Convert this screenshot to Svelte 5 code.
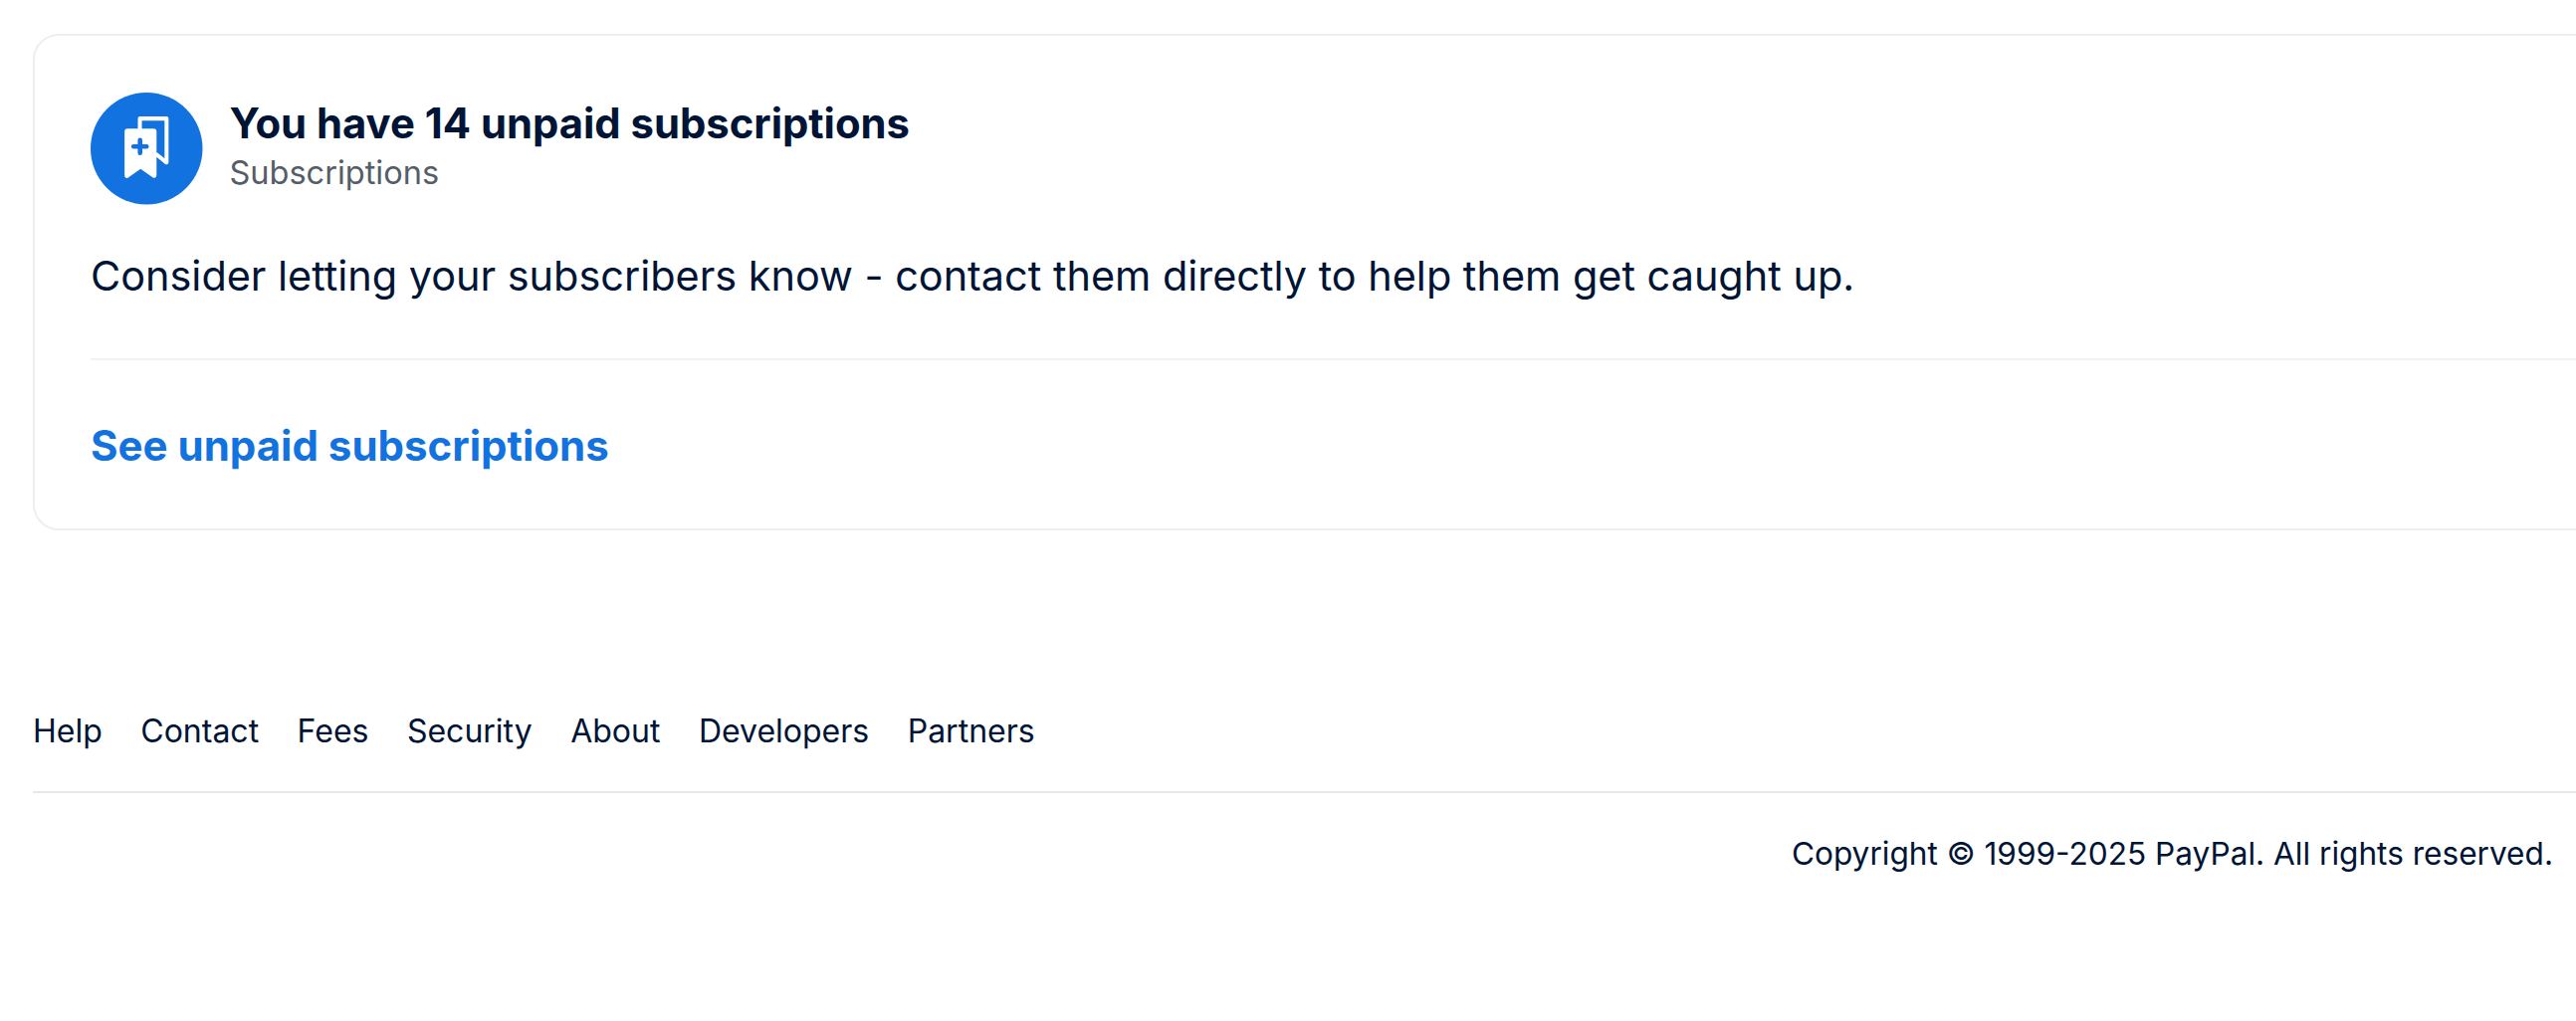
<!-- Unpaid subscriptions notice with page footer -->
<script>
  const footerLinks = ['Help', 'Contact', 'Fees', 'Security', 'About', 'Developers', 'Partners'];
</script>

<main class="page">
  <section class="card">
    <header class="card-head">
      <div class="badge">
        <svg viewBox="0 0 112 112" width="112.500" height="112.500" aria-hidden="true">
          <circle cx="56" cy="56" r="56" fill="#1272e0" />
          <path d="M49.3 36V26H76V70L66 62" fill="none" stroke="#fff" stroke-width="4" stroke-linejoin="round" stroke-linecap="round" />
          <path d="M37 36H63a3 3 0 0 1 3 3V83a2.4 2.4 0 0 1-3.9 1.9L50 76.500 38 84.900A2.400 2.400 0 0 1 34 83V39a3 3 0 0 1 3-3Z" fill="#fff" />
          <path d="M43 54H56M49.500 47.500V60.500" fill="none" stroke="#1272e0" stroke-width="4.600" stroke-linecap="round" />
        </svg>
      </div>
      <div class="titles">
        <h2>You have 14 unpaid subscriptions</h2>
        <p class="source">Subscriptions</p>
      </div>
    </header>
    <p class="message">Consider letting your subscribers know - contact them directly to help them get caught up.</p>
    <div class="action">
      <a href="#unpaid">See unpaid subscriptions</a>
    </div>
  </section>

  <footer class="footer">
    <nav class="links">
      {#each footerLinks as link}
        <a href="#{link.toLowerCase()}">{link}</a>
      {/each}
    </nav>
    <p class="copyright">Copyright © 1999-2025 PayPal. All rights reserved.</p>
  </footer>
</main>

<style>
  :global(body) {
    margin: 0;
    background: #fff;
    overflow: hidden;
  }

  .page {
    width: 2588px;
    height: 1026px;
    overflow: hidden;
    padding-top: 34px;
    box-sizing: border-box;
    font-family: Inter, "Liberation Sans", sans-serif;
    color: #001435;
  }

  .card {
    width: 2640px;
    height: 499px;
    margin-left: 33px;
    box-sizing: border-box;
    border: 2px solid #eeeeee;
    border-radius: 26px;
    padding: 57px 0 0 56px;
  }

  .card-head {
    display: flex;
    align-items: center;
    gap: 27px;
  }

  .badge {
    display: flex;
    flex: none;
  }

  h2 {
    margin: -4px 0 0;
    font-size: 41.8px;
    line-height: 50px;
    font-weight: 700;
  }

  .source {
    margin: 3px 0 0;
    font-size: 32.5px;
    line-height: 44px;
    color: #545d68;
  }

  .message {
    margin: 43px 0 0;
    font-size: 41.4px;
    line-height: 56px;
  }

  .action {
    margin-top: 55px;
    border-top: 2px solid #f1f1ef;
    padding-top: 58px;
  }

  .action a {
    font-size: 42px;
    line-height: 56px;
    font-weight: 700;
    color: #1272e0;
    text-decoration: none;
    display: inline-block;
  }

  .footer {
    margin: 177px 0 0 33px;
  }

  .links {
    display: flex;
    gap: 38.500px;
    padding-bottom: 35px;
    border-bottom: 2px solid #ebe8e4;
  }

  .links a {
    font-size: 32px;
    line-height: 50px;
    color: #001435;
    text-decoration: none;
  }

  .copyright {
    margin: 39px 23px 0 0;
    text-align: right;
    font-size: 31.6px;
    line-height: 44px;
  }
</style>
